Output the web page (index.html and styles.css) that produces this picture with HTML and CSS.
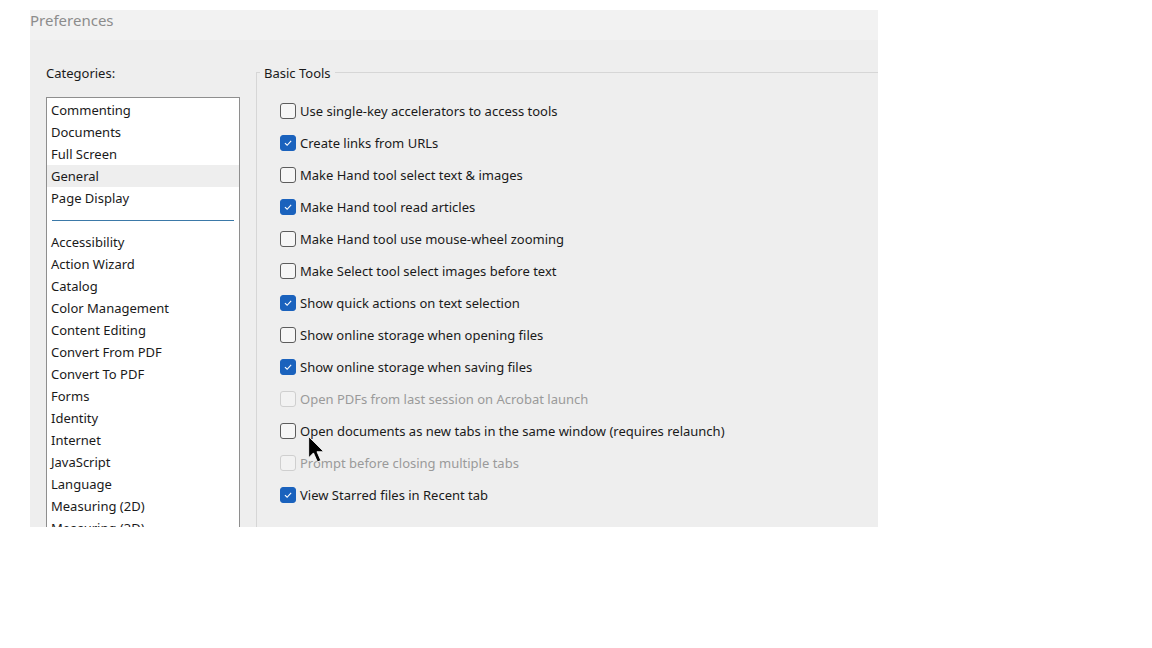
FILE: index.html
```html
<!DOCTYPE html>
<html>
<head>
<meta charset="utf-8">
<link rel="stylesheet" href="styles.css">
</head>
<body>
<div class="window">
  <div class="titlebar">Preferences</div>
  <div class="content">
    <div class="left">
      <div class="label">Categories:</div>
      <div class="listbox">
        <div class="item">Commenting</div>
        <div class="item">Documents</div>
        <div class="item">Full Screen</div>
        <div class="item selected">General</div>
        <div class="item">Page Display</div>
        <div class="sep"></div>
        <div class="item">Accessibility</div>
        <div class="item">Action Wizard</div>
        <div class="item">Catalog</div>
        <div class="item">Color Management</div>
        <div class="item">Content Editing</div>
        <div class="item">Convert From PDF</div>
        <div class="item">Convert To PDF</div>
        <div class="item">Forms</div>
        <div class="item">Identity</div>
        <div class="item">Internet</div>
        <div class="item">JavaScript</div>
        <div class="item">Language</div>
        <div class="item">Measuring (2D)</div>
        <div class="item">Measuring (3D)</div>
      </div>
    </div>
    <div class="group">
      <div class="legend">Basic Tools</div>
      <div class="options">
        <div class="opt"><span class="cb"></span>Use single-key accelerators to access tools</div>
        <div class="opt"><span class="cb on"><svg viewBox="0 0 16 16"><path d="M4.5 8.2 L7 10.6 L11.6 5.6" /></svg></span>Create links from URLs</div>
        <div class="opt"><span class="cb"></span>Make Hand tool select text &amp; images</div>
        <div class="opt"><span class="cb on"><svg viewBox="0 0 16 16"><path d="M4.5 8.2 L7 10.6 L11.6 5.6" /></svg></span>Make Hand tool read articles</div>
        <div class="opt"><span class="cb"></span>Make Hand tool use mouse-wheel zooming</div>
        <div class="opt"><span class="cb"></span>Make Select tool select images before text</div>
        <div class="opt"><span class="cb on"><svg viewBox="0 0 16 16"><path d="M4.5 8.2 L7 10.6 L11.6 5.6" /></svg></span>Show quick actions on text selection</div>
        <div class="opt"><span class="cb"></span>Show online storage when opening files</div>
        <div class="opt"><span class="cb on"><svg viewBox="0 0 16 16"><path d="M4.5 8.2 L7 10.6 L11.6 5.6" /></svg></span>Show online storage when saving files</div>
        <div class="opt disabled"><span class="cb"></span>Open PDFs from last session on Acrobat launch</div>
        <div class="opt"><span class="cb"></span>Open documents as new tabs in the same window (requires relaunch)</div>
        <div class="opt disabled"><span class="cb"></span>Prompt before closing multiple tabs</div>
        <div class="opt"><span class="cb on"><svg viewBox="0 0 16 16"><path d="M4.5 8.2 L7 10.6 L11.6 5.6" /></svg></span>View Starred files in Recent tab</div>
      </div>
    </div>
  </div>
  <svg class="cursor" viewBox="0 0 14 24" width="17" height="29"><path d="M0.5 0.5 L0.5 18 L4.5 14 L7.8 21.5 L10.6 20.3 L7.4 13 L13 13 Z" fill="#000" stroke="#fff" stroke-width="0.7"/></svg>
</div>
</body>
</html>
```

FILE: styles.css
```css
html, body {
  margin: 0;
  padding: 0;
  background: #ffffff;
}
body {
  font-family: "Noto Sans", "Open Sans", "DejaVu Sans", sans-serif;
  font-size: 13px;
  color: #1a1a1a;
}
.window {
  position: relative;
  margin: 10px 0 0 30px;
  width: 848px;
  height: 517px;
  background: #eeeeee;
  overflow: hidden;
}
.titlebar {
  height: 30px;
  background: #f2f2f2;
  color: #8c8c8c;
  font-size: 15px;
  line-height: 20px;
  padding-left: 0;
}
.content {
  display: flex;
  padding: 23px 0 0 16px;
}
.left {
  width: 194px;
  display: flex;
  flex-direction: column;
}
.label {
  height: 24px;
  line-height: 20px;
  color: #1a1a1a;
}
.listbox {
  margin-top: 10px;
  background: #ffffff;
  border: 1px solid #8e8e8e;
  height: 440px;
  padding-top: 1px;
  overflow: hidden;
}
.item {
  height: 22px;
  line-height: 22px;
  padding-left: 4px;
  white-space: nowrap;
}
.item.selected {
  background: #eeeeee;
}
.sep {
  height: 1px;
  background: #3b79a8;
  margin: 11px 5px 10px 5px;
}
.group {
  margin-left: 16px;
  flex: 1;
  border-left: 1px solid #d6d6d6;
  border-top: 1px solid #d6d6d6;
  margin-top: 9px;
  height: 500px;
  position: relative;
}
.legend {
  position: absolute;
  top: -10px;
  left: 3px;
  padding: 0 4px;
  background: #eeeeee;
  line-height: 20px;
}
.options {
  padding: 22px 0 0 23px;
  display: flex;
  flex-direction: column;
}
.opt {
  height: 32px;
  display: flex;
  align-items: center;
  white-space: nowrap;
  color: #1a1a1a;
}
.opt.disabled {
  color: #9a9a9a;
}
.cb {
  width: 14px;
  height: 14px;
  border: 1px solid #5c5c5c;
  border-radius: 3px;
  background: #f6f6f6;
  margin-right: 4px;
  display: inline-flex;
  flex: none;
}
.opt.disabled .cb {
  border-color: #cfcfcf;
  background: #f2f2f2;
}
.cb.on {
  background: #1a62bd;
  border-color: #1a62bd;
}
.cb svg {
  width: 14px;
  height: 14px;
  fill: none;
  stroke: #ffffff;
  stroke-width: 1.3;
}
.cursor {
  position: absolute;
  left: 278px;
  top: 426px;
}
```
